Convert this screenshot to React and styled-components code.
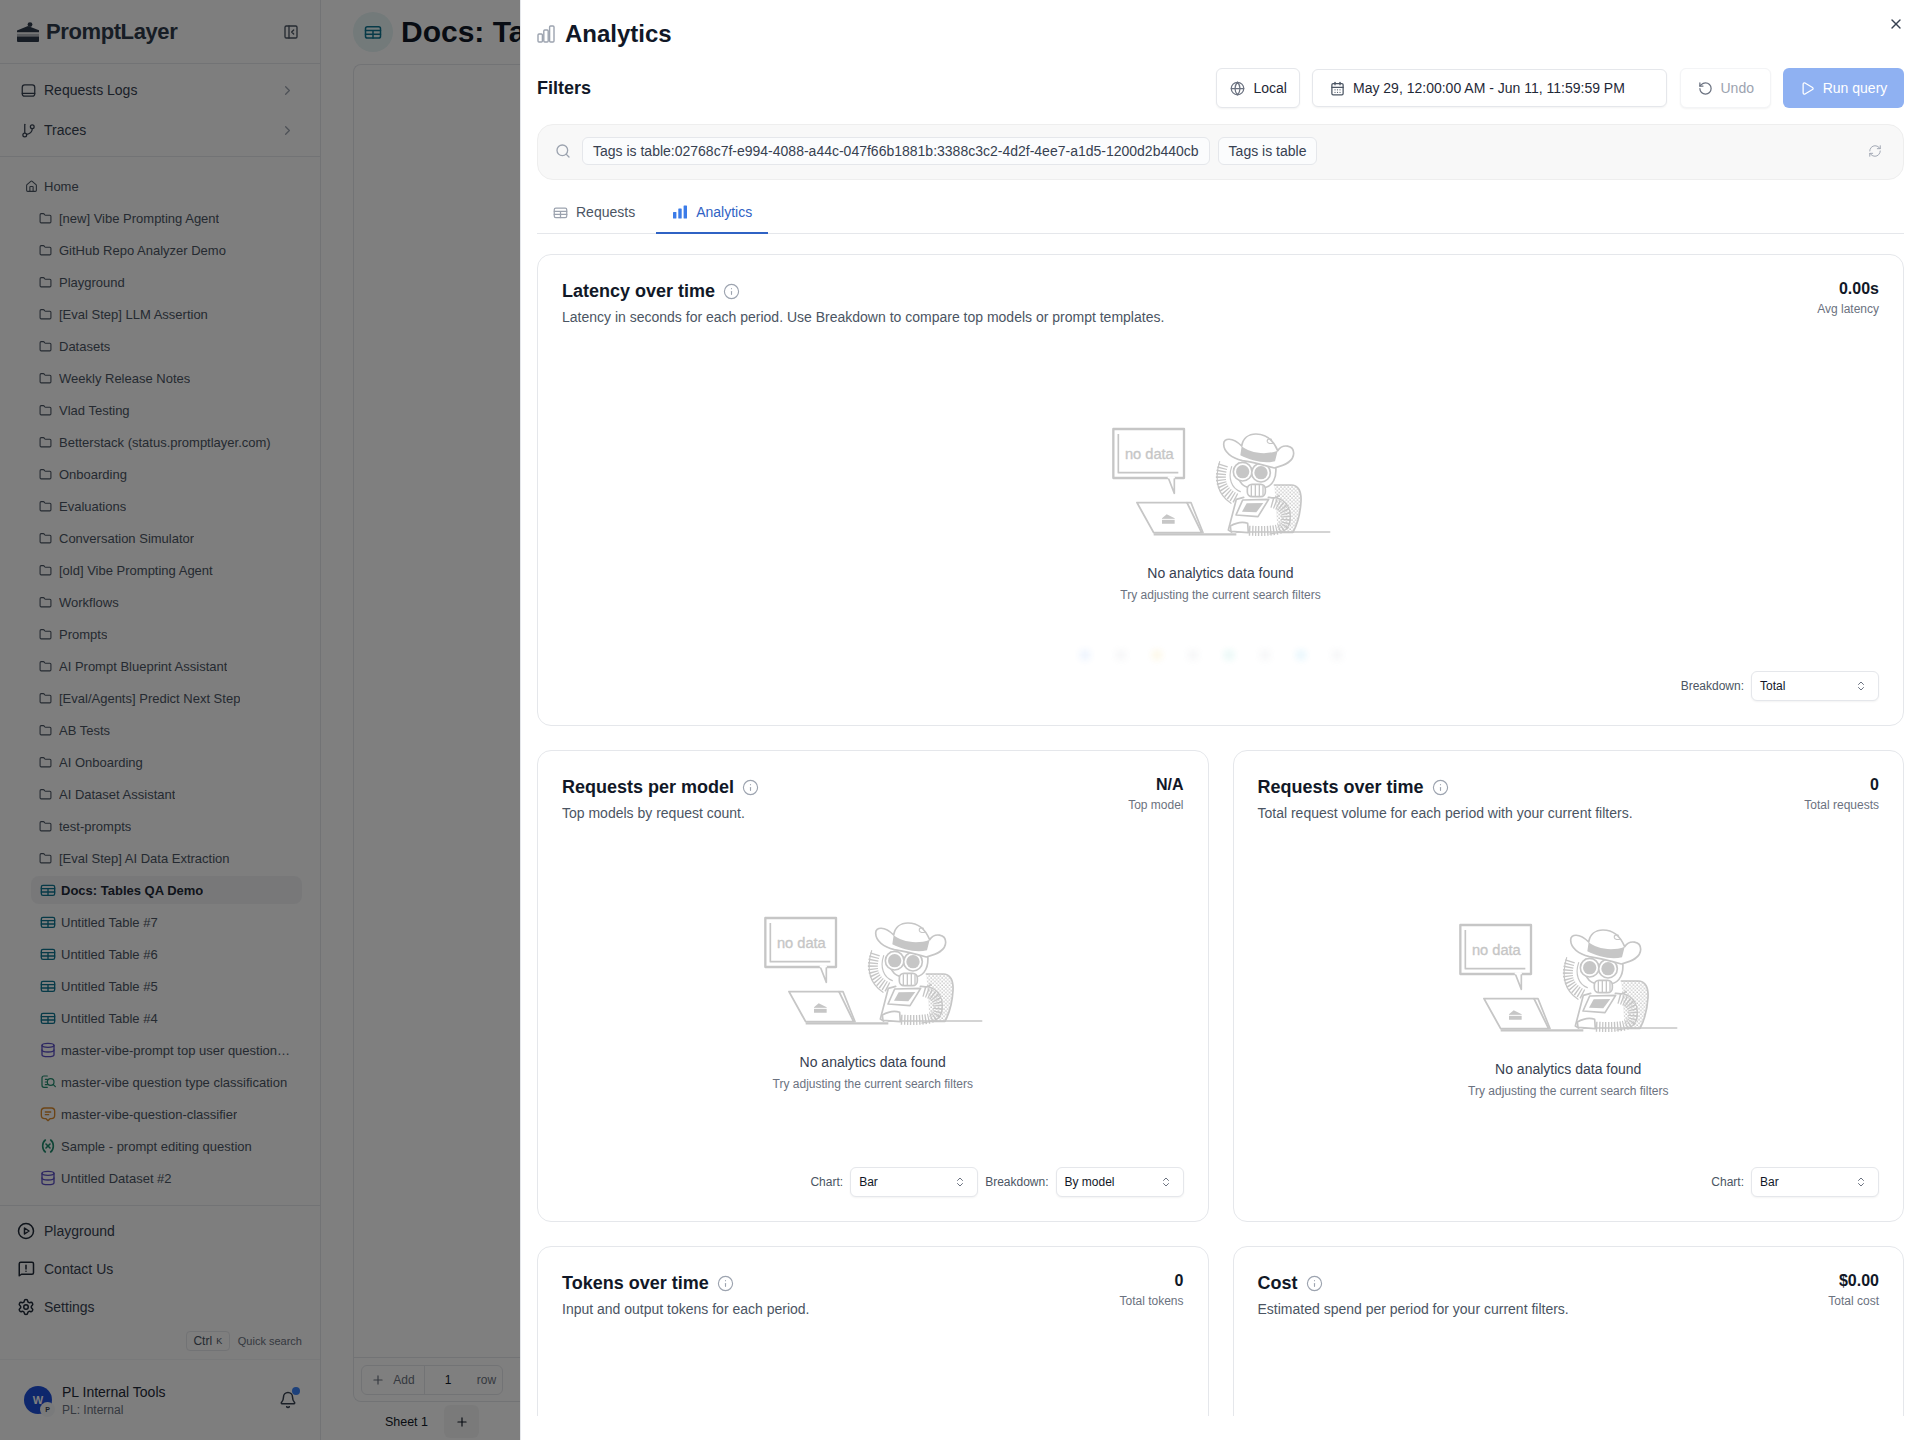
import React from "react";
import styled, { createGlobalStyle } from "styled-components";
import {
  Bell, ChevronRight, ChevronsUpDown, CalendarDays, Database, Folder, Globe, House,
  Info, PanelLeftClose, Play, Plus, RefreshCw, RotateCcw, Search, Settings,
  Variable, X,
} from "lucide-react";

const GlobalStyle = createGlobalStyle`
  html, body { margin: 0; padding: 0; background: #fff; }
  body { font-family: "Liberation Sans", Arial, sans-serif; color: #111827; }
  * { box-sizing: border-box; }
`;

const Page = styled.div`
  position: relative;
  width: 1920px;
  height: 1440px;
  display: flex;
  overflow: hidden;
  background: #fff;
`;

/* ---------- sidebar ---------- */
const Sidebar = styled.aside`
  width: 321px;
  flex: none;
  display: flex;
  flex-direction: column;
  height: 100%;
  background: #fcfcfc;
  border-right: 1px solid #e5e7eb;
`;
const LogoBar = styled.div`
  height: 64px;
  flex: none;
  display: flex;
  align-items: center;
  padding: 0 21px 0 16px;
  border-bottom: 1px solid #e5e7eb;
  color: #4b5563;
`;
const LogoText = styled.span`
  font-size: 22px;
  font-weight: 700;
  letter-spacing: -0.4px;
  color: #2f3a4a;
  margin-left: 6px;
  flex: 1;
`;
const NavTop = styled.div`
  padding: 6px 0;
  border-bottom: 1px solid #e5e7eb;
`;
const NavRow = styled.div`
  height: ${(p) => p.$h || 40}px;
  display: flex;
  align-items: center;
  gap: ${(p) => p.$gap || 8}px;
  padding: 0 25px 0 ${(p) => p.$pad || 21}px;
  font-size: 14px;
  color: #374151;
  svg { flex: none; }
`;
const NavLabel = styled.span`
  flex: 1;
`;
const TreeList = styled.div`
  flex: 1;
  padding: 13px 0 0;
  border-bottom: 1px solid #e5e7eb;
`;
const HomeRow = styled.div`
  height: 32px;
  display: flex;
  align-items: center;
  gap: 6px;
  padding-left: 25px;
  font-size: 13px;
  color: #4b5563;
`;
const TreeRow = styled.div`
  height: ${(p) => (p.$doc ? 28 : 32)}px;
  margin: ${(p) => (p.$doc ? `${p.$selected ? 2 : 0}px 18px 4px 31px` : "0 18px 0 31px")};
  display: flex;
  align-items: center;
  gap: ${(p) => (p.$doc ? 5 : 7)}px;
  padding: 0 6px 0 ${(p) => (p.$doc ? 9 : 8)}px;
  font-size: 13px;
  font-weight: ${(p) => (p.$selected ? 700 : 400)};
  color: ${(p) => (p.$selected ? "#1f2937" : "#4b5563")};
  background: ${(p) => (p.$selected ? "#f0f1f3" : "transparent")};
  border-radius: 8px;
  svg { flex: none; }
`;
const TreeLabel = styled.span`
  white-space: nowrap;
  overflow: hidden;
  text-overflow: ellipsis;
`;
const NavBottom = styled.div`
  padding-top: 6px;
  flex: none;
`;
const SearchHint = styled.div`
  height: 20px;
  flex: none;
  margin-top: 5px;
  padding-right: 18px;
  display: flex;
  justify-content: flex-end;
  align-items: center;
  gap: 8px;
  font-size: 11px;
  color: #6b7280;
`;
const Kbd = styled.span`
  height: 20px;
  width: 44px;
  border: 1px solid #e5e7eb;
  border-radius: 4px;
  display: flex;
  align-items: center;
  justify-content: center;
  gap: 4px;
  font-size: 12px;
  color: #4b5563;
  small { font-size: 9px; }
`;
const Account = styled.div`
  margin-top: 8px;
  height: 81px;
  flex: none;
  display: flex;
  align-items: center;
  padding: 0 23px 0 24px;
  border-top: 1px solid #f1f2f4;
`;
const Avatar = styled.div`
  position: relative;
  width: 28px;
  height: 28px;
  flex: none;
  border-radius: 50%;
  background: #1d4ed8;
  color: #fff;
  font-size: 11px;
  font-weight: 700;
  display: flex;
  align-items: center;
  justify-content: center;
`;
const AvatarBadge = styled.span`
  position: absolute;
  right: -3px;
  bottom: -3px;
  width: 15px;
  height: 15px;
  border-radius: 50%;
  background: #f3f4f6;
  color: #374151;
  font-size: 7px;
  display: flex;
  align-items: center;
  justify-content: center;
`;
const AccountText = styled.div`
  flex: 1;
  margin-left: 10px;
`;
const AccountName = styled.div`
  font-size: 14px;
  line-height: 18px;
  color: #1f2937;
`;
const AccountOrg = styled.div`
  font-size: 12px;
  line-height: 16px;
  margin-top: 1px;
  color: #6b7280;
`;
const BellWrap = styled.div`
  position: relative;
  width: 18px;
  height: 18px;
  color: #374151;
`;
const BellDot = styled.span`
  position: absolute;
  top: -4px;
  right: -3px;
  width: 8px;
  height: 8px;
  border-radius: 50%;
  background: #3b82f6;
`;

/* ---------- page under the drawer ---------- */
const Main = styled.main`
  flex: 1;
  min-width: 0;
  display: flex;
  flex-direction: column;
  padding: 0 0 2px 32px;
`;
const MainHeader = styled.div`
  height: 64px;
  flex: none;
  display: flex;
  align-items: center;
  gap: 8px;
  white-space: nowrap;
`;
const TitleIcon = styled.div`
  width: 40px;
  height: 40px;
  border-radius: 50%;
  background: #e6f4f5;
  color: #0e7490;
  flex: none;
  display: flex;
  align-items: center;
  justify-content: center;
`;
const MainTitle = styled.h1`
  margin: 0;
  font-size: 30px;
  font-weight: 700;
  color: #111827;
`;
const TableCard = styled.div`
  flex: 1;
  display: flex;
  flex-direction: column;
  justify-content: flex-end;
  border: 1px solid #e5e7eb;
  border-right: none;
  border-radius: 8px 0 0 8px;
`;
const AddBar = styled.div`
  height: 44px;
  border-top: 1px solid #e5e7eb;
  padding: 7px;
`;
const AddGroup = styled.div`
  width: 142px;
  height: 30px;
  display: flex;
  align-items: center;
  border: 1px solid #e5e7eb;
  border-radius: 6px;
  font-size: 12px;
  color: #6b7280;
`;
const AddPart = styled.span`
  width: ${(p) => p.$w}px;
  height: 100%;
  display: flex;
  align-items: center;
  justify-content: center;
  gap: 8px;
  color: ${(p) => (p.$dark ? "#111827" : "#6b7280")};
  border-right: ${(p) => (p.$line ? "1px solid #e5e7eb" : "none")};
`;
const SheetTabs = styled.div`
  height: 33px;
  margin-top: 3px;
  flex: none;
  display: flex;
  gap: 5px;
`;
const SheetTab = styled.div`
  width: 86px;
  display: flex;
  align-items: center;
  justify-content: flex-end;
  padding-right: 11px;
  font-size: 12.5px;
  color: #111827;
  border-radius: 6px;
`;
const SheetAdd = styled.div`
  width: 35px;
  background: #f5f5f5;
  border-radius: 6px;
  display: flex;
  align-items: center;
  justify-content: center;
  color: #111827;
`;
const Overlay = styled.div`
  position: absolute;
  inset: 0;
  background: rgba(0, 0, 0, 0.5);
`;

/* ---------- analytics drawer ---------- */
const Drawer = styled.section`
  position: absolute;
  top: 0;
  right: 0;
  bottom: 0;
  width: 1400px;
  background: #fff;
  border-left: 1px solid #e5e7eb;
  padding: 0 16px 24px;
  display: flex;
  flex-direction: column;
`;
const CloseButton = styled.div`
  position: absolute;
  top: 16px;
  right: 16px;
  color: #374151;
  display: flex;
`;
const DrawerTitle = styled.div`
  height: 68px;
  flex: none;
  display: flex;
  align-items: center;
  gap: 10px;
  font-size: 24px;
  font-weight: 700;
  color: #111827;
  padding-bottom: 1px;
`;
const FilterHead = styled.div`
  height: 40px;
  flex: none;
  display: flex;
  align-items: center;
  gap: 12.5px;
`;
const FilterTitle = styled.div`
  flex: 1;
  font-size: 18px;
  font-weight: 700;
  color: #111827;
`;
const ToolButton = styled.div`
  width: ${(p) => p.$w}px;
  height: ${(p) => p.$h || 40}px;
  display: flex;
  align-items: center;
  gap: ${(p) => p.$gap || 8}px;
  padding-left: ${(p) => p.$pad || 13}px;
  border: 1px solid ${(p) => (p.$muted ? "#f3f4f6" : "#e5e7eb")};
  border-radius: 6px;
  background: #fff;
  font-size: 14px;
  color: ${(p) => (p.$muted ? "#9ca3af" : "#1f2937")};
  box-shadow: 0 1px 2px rgba(0, 0, 0, 0.05);
`;
const RunButton = styled.div`
  width: 121px;
  height: 40px;
  display: flex;
  align-items: center;
  justify-content: center;
  gap: 8px;
  border-radius: 6px;
  background: #8fb1f2;
  color: #fff;
  font-size: 14px;
`;
const FilterBar = styled.div`
  height: 56px;
  flex: none;
  margin-top: 16px;
  display: flex;
  align-items: center;
  gap: 8px;
  padding: 0 21px 2px 17px;
  background: #f8f8f8;
  border: 1px solid #eeeeee;
  border-radius: 16px;
  color: #9ca3af;
`;
const Chip = styled.span`
  height: 28px;
  display: flex;
  align-items: center;
  padding: 0 10px;
  background: #fbfcfd;
  border: 1px solid #e5e7eb;
  border-radius: 6px;
  font-size: 14px;
  color: #374151;
  white-space: nowrap;
`;
const ChipFirst = styled(Chip)`
  margin-left: 3px;
`;
const Spacer = styled.div`
  flex: 1;
`;
const Tabs = styled.div`
  height: 54px;
  flex: none;
  display: flex;
  gap: 5px;
  border-bottom: 1px solid #e5e7eb;
`;
const Tab = styled.div`
  display: flex;
  align-items: center;
  gap: 8px;
  padding: 12px 16px 0;
  margin-bottom: -1px;
  font-size: 14px;
  color: ${(p) => (p.$active ? "#2f62c4" : "#4b5563")};
  border-bottom: 2px solid ${(p) => (p.$active ? "#2f62c4" : "transparent")};
`;
const ScrollArea = styled.div`
  flex: 1;
  min-height: 0;
  overflow: hidden;
  padding-top: 20px;
  display: flex;
  flex-direction: column;
  gap: 24px;
`;
const CardGrid = styled.div`
  display: grid;
  grid-template-columns: 1fr 1fr;
  gap: 24px;
`;
const Card = styled.article`
  position: relative;
  height: 472px;
  flex: none;
  display: flex;
  flex-direction: column;
  padding: 22px 24px 24px;
  background: #fff;
  border: 1px solid #e5e7eb;
  border-radius: 14px;
`;
const CardHead = styled.div`
  display: flex;
  justify-content: space-between;
  flex: none;
`;
const CardTitle = styled.h3`
  margin: 0;
  display: flex;
  align-items: center;
  gap: 8px;
  font-size: 18px;
  line-height: 28px;
  font-weight: 700;
  color: #111827;
  svg { color: #9ca3af; }
`;
const CardDesc = styled.p`
  margin: 2px 0 0;
  font-size: 14px;
  line-height: 20px;
  color: #4b5563;
`;
const Stat = styled.div`
  text-align: right;
`;
const StatValue = styled.div`
  font-size: 16px;
  line-height: 24px;
  font-weight: 700;
  color: #111827;
`;
const StatLabel = styled.div`
  font-size: 12px;
  line-height: 16px;
  color: #6b7280;
`;
const Chart = styled.div`
  flex: 1;
  min-height: 0;
  position: relative;
  display: flex;
  flex-direction: column;
  align-items: center;
  justify-content: center;
  padding-top: ${(p) => p.$offset}px;
`;
const EmptyTitle = styled.div`
  margin-top: 23px;
  font-size: 14px;
  line-height: 20px;
  color: #374151;
`;
const EmptyHint = styled.div`
  margin-top: 4px;
  font-size: 12px;
  line-height: 16px;
  color: #6b7280;
`;
const BlurLegend = styled.div`
  position: absolute;
  left: calc(50% - 10px);
  bottom: 64px;
  transform: translateX(-50%);
  display: flex;
  gap: 24px;
  filter: blur(3px);
  opacity: 0.08;
`;
const LegendDot = styled.span`
  width: 12px;
  height: 12px;
  border-radius: 50%;
  background: ${(p) => p.$color};
`;
const CardFoot = styled.div`
  height: 30px;
  flex: none;
  display: flex;
  justify-content: flex-end;
  align-items: center;
  gap: 7px;
  font-size: 12px;
  color: #4b5563;
`;
const Select = styled.div`
  width: 128px;
  height: 30px;
  display: flex;
  align-items: center;
  justify-content: space-between;
  padding: 0 11px 0 8px;
  background: #fff;
  border: 1px solid #e5e7eb;
  border-radius: 6px;
  box-shadow: 0 1px 2px rgba(0, 0, 0, 0.05);
  font-size: 12px;
  color: #111827;
  svg { color: #6b7280; }
`;

const folders = [
  "[new] Vibe Prompting Agent", "GitHub Repo Analyzer Demo", "Playground", "[Eval Step] LLM Assertion",
  "Datasets", "Weekly Release Notes", "Vlad Testing", "Betterstack (status.promptlayer.com)", "Onboarding",
  "Evaluations", "Conversation Simulator", "[old] Vibe Prompting Agent", "Workflows", "Prompts",
  "AI Prompt Blueprint Assistant", "[Eval/Agents] Predict Next Step", "AB Tests", "AI Onboarding",
  "AI Dataset Assistant", "test-prompts", "[Eval Step] AI Data Extraction",
];

const TEAL = "#0e7490";
const PURPLE = "#5b4fc4";

// wide table glyph used for table items, the page title and the Requests tab
const TableIcon = ({ size = 16, color = TEAL, weight = 2 }) => (
  <svg width={size} height={size} viewBox="0 0 24 24" fill="none" stroke={color} strokeWidth={weight} strokeLinecap="round" strokeLinejoin="round">
    <rect x="2" y="5" width="20" height="15" rx="2.5" />
    <path d="M2 10h20M2 15h20M12 10v10" />
  </svg>
);

const EvalIcon = () => (
  <svg width="16" height="16" viewBox="0 0 24 24" fill="none" stroke="#1f8a6d" strokeWidth="1.8" strokeLinecap="round" strokeLinejoin="round">
    <path d="M11 3H6a3 3 0 0 0-3 3v11a3 3 0 0 0 3 3h5" />
    <path d="M8 8h3M8 12h2M8 16h3" />
    <circle cx="16" cy="12" r="5" />
    <path d="m20 16 3 3" />
  </svg>
);

const BubbleIcon = () => (
  <svg width="16" height="16" viewBox="0 0 24 24" fill="none" stroke="#d9882b" strokeWidth="2" strokeLinecap="round" strokeLinejoin="round">
    <path d="M7 3h10a5 5 0 0 1 5 5v6a5 5 0 0 1-5 5h-2l-3 3-3-3H7a5 5 0 0 1-5-5V8a5 5 0 0 1 5-5z" />
    <path d="M8 9h8M8 13h5" />
  </svg>
);

const docs = [
  { name: "Docs: Tables QA Demo", icon: <TableIcon />, selected: true },
  { name: "Untitled Table #7", icon: <TableIcon /> },
  { name: "Untitled Table #6", icon: <TableIcon /> },
  { name: "Untitled Table #5", icon: <TableIcon /> },
  { name: "Untitled Table #4", icon: <TableIcon /> },
  { name: "master-vibe-prompt top user questions dataset", icon: <Database size={16} color={PURPLE} /> },
  { name: "master-vibe question type classification", icon: <EvalIcon /> },
  { name: "master-vibe-question-classifier", icon: <BubbleIcon /> },
  { name: "Sample - prompt editing question", icon: <Variable size={16} color="#1f8a6d" strokeWidth={2.4} /> },
  { name: "Untitled Dataset #2", icon: <Database size={16} color={PURPLE} /> },
];

const CakeLogo = () => (
  <svg width="24" height="20" viewBox="0 0 24 20" fill="#2f3a4a">
    <circle cx="14" cy="2.6" r="2.4" />
    <path d="M1 8.5 12 4l11 4.2v2H1z" />
    <path d="M1 11.8h22v2.6H1z" opacity="0.35" />
    <path d="M1 14.6h22V19a1 1 0 0 1-1 1H2a1 1 0 0 1-1-1z" />
  </svg>
);

const RequestsIcon = () => (
  <svg width="15" height="15" viewBox="0 0 24 24" fill="none" stroke="currentColor" strokeWidth="2" strokeLinecap="round" strokeLinejoin="round">
    <rect x="2" y="3" width="20" height="18" rx="4" />
    <path d="M2 16.5h20" />
  </svg>
);

const TracesIcon = () => (
  <svg width="15" height="15" viewBox="0 0 24 24" fill="none" stroke="currentColor" strokeWidth="2" strokeLinecap="round" strokeLinejoin="round">
    <path d="M6 2v13" />
    <circle cx="6" cy="19" r="3" />
    <circle cx="18" cy="6" r="3" />
    <path d="M18 9c0 5-4 9-9 9" />
  </svg>
);

const BarsOutline = () => (
  <svg width="18" height="18" viewBox="0 0 18 18" fill="none" stroke="#9ca3af" strokeWidth="1.4">
    <rect x="1" y="9" width="4.4" height="8" rx="1" />
    <rect x="6.8" y="5" width="4.4" height="12" rx="1" />
    <rect x="12.6" y="1" width="4.4" height="16" rx="1" />
  </svg>
);

const BarsSolid = () => (
  <svg width="16" height="16" viewBox="0 0 16 16" fill="#3b7be8">
    <rect x="1" y="8" width="3.4" height="6.5" rx="0.6" />
    <rect x="6.3" y="4.5" width="3.4" height="10" rx="0.6" />
    <rect x="11.6" y="1.5" width="3.4" height="13" rx="0.6" />
  </svg>
);

/* the "no data" mascot, drawn in 3x pixel units of the reference */
const NoDataArt = () => {
  const c = "#c6c6c6";
  return (
    <svg width="224" height="116" viewBox="84 72 672 348" fill="none" stroke={c} strokeWidth="5" strokeLinejoin="round" strokeLinecap="round">
      <defs>
        <pattern id="chair-dots" width="11" height="11" patternUnits="userSpaceOnUse">
          <circle cx="3" cy="3" r="2.6" fill={c} stroke="none" />
          <circle cx="8.5" cy="8.5" r="2.6" fill={c} stroke="none" />
        </pattern>
      </defs>
      <rect x="97" y="87" width="212" height="147" strokeWidth="7" strokeLinecap="butt" />
      <path d="M112 102v116h180" strokeLinecap="butt" />
      <path d="M262 234l18 46v-46" fill="#fff" strokeWidth="5" />
      <path d="M264 232h14" stroke="#fff" strokeWidth="7" />
      <text x="205" y="178" textAnchor="middle" fontFamily="Liberation Sans, Arial, sans-serif" fontSize="44" fill={c} stroke={c} strokeWidth="1">no data</text>
      <path d="M168 308h150l44 90H218z" strokeWidth="5.5" />
      <path d="M318 308h12l36 90" />
      <path d="M218 403h248" strokeWidth="7" strokeLinecap="butt" />
      <path d="M243 355l14-12 24 12v16h-38z" fill={c} stroke="none" />
      <path d="M243 358h38" stroke="#fff" strokeWidth="3" />
      <path d="M466 396h280" />
      <g transform="translate(300 60)">
        <path d="M280 195h50c22 0 32 18 30 50-2 34-10 66-24 92h-46" fill="url(#chair-dots)" />
        <path d="M165 235C125 215 108 185 128 130" strokeWidth="30" strokeDasharray="4 5" strokeLinecap="butt" />
        <path d="M150 250C112 225 98 185 116 125M178 215C152 205 140 175 152 140" strokeWidth="3.5" />
        <path d="M188 232l-22 6-24 92 10 6" />
        <path d="M262 232c14 2 24 4 32-6" />
        <path d="M272 248c30 8 48 24 42 58-4 22-26 30-112 26" strokeWidth="30" strokeDasharray="4 5" strokeLinecap="butt" />
        <path d="M282 232c34 8 52 36 44 74-6 30-30 32-60 36" strokeWidth="3.5" />
        <path d="M148 318c18-10 36-14 52-8l2 28-52-4z" fill="#fff" />
        <path d="M185 240l78-2-32 52-66-5z" fill="#fff" />
        <path d="M197 250l50-1-21 28-43-2z" fill={c} stroke="none" />
        <path d="M172 130c-10 30 2 66 28 72l50 2c26-6 38-32 34-66" fill="#fff" />
        <rect x="199" y="193" width="54" height="37" rx="14" fill="#fff" />
        <path d="M211 197v30M223 195v34M235 195v34M246 198v26" strokeWidth="4" />
        <circle cx="185" cy="155" r="28" fill="#fff" />
        <circle cx="185" cy="155" r="20" fill={c} stroke="none" />
        <circle cx="240" cy="158" r="28" fill="#fff" />
        <circle cx="240" cy="158" r="20" fill={c} stroke="none" />
        <path d="M128 72c0-18 26-22 54 6 4-22 20-36 43-36 30 0 50 14 65 50 15-22 48-17 48 8 0 25-26 36-58 44-36-10-70-18-96-22-32-8-56-26-56-50z" fill="#fff" />
        <path d="M182 78c18 18 68 30 108 14l-8 32c-32 8-72-2-104-18z" fill={c} stroke="none" />
        <path d="M271 58c-6-4-14 0-12 7 2 5 10 7 18 4" strokeWidth="3.5" />
      </g>
    </svg>
  );
};

const EmptyState = ({ offset }) => (
  <Chart $offset={offset}>
    <NoDataArt />
    <EmptyTitle>No analytics data found</EmptyTitle>
    <EmptyHint>Try adjusting the current search filters</EmptyHint>
  </Chart>
);

const SelectBox = ({ label, value }) => (
  <>
    <span>{label}</span>
    <Select>
      {value}
      <ChevronsUpDown size={12} />
    </Select>
  </>
);

const Header = ({ title, desc, value, label }) => (
  <CardHead>
    <div>
      <CardTitle>{title}<Info size={17} strokeWidth={1.6} /></CardTitle>
      <CardDesc>{desc}</CardDesc>
    </div>
    <Stat>
      <StatValue>{value}</StatValue>
      <StatLabel>{label}</StatLabel>
    </Stat>
  </CardHead>
);

function BlurLegendRow() {
  return (
    <BlurLegend>
      {["#3b82f6", "#9ca3af", "#eab308", "#9ca3af", "#14b8a6", "#9ca3af", "#0ea5e9", "#9ca3af"].map((color, i) => (
        <LegendDot key={i} $color={color} />
      ))}
    </BlurLegend>
  );
}

export default function App() {
  return (
    <Page>
      <GlobalStyle />
      <Sidebar>
        <LogoBar>
          <CakeLogo />
          <LogoText>PromptLayer</LogoText>
          <PanelLeftClose size={16} />
        </LogoBar>
        <NavTop>
          <NavRow><RequestsIcon /><NavLabel>Requests Logs</NavLabel><ChevronRight size={15} color="#9ca3af" /></NavRow>
          <NavRow><TracesIcon /><NavLabel>Traces</NavLabel><ChevronRight size={15} color="#9ca3af" /></NavRow>
        </NavTop>
        <TreeList>
          <HomeRow><House size={13} />Home</HomeRow>
          {folders.map((name) => (
            <TreeRow key={name}><Folder size={13} /><TreeLabel>{name}</TreeLabel></TreeRow>
          ))}
          {docs.map((doc) => (
            <TreeRow key={doc.name} $doc $selected={doc.selected}>{doc.icon}<TreeLabel>{doc.name}</TreeLabel></TreeRow>
          ))}
        </TreeList>
        <NavBottom>
          <NavRow $h={38} $pad={17} $gap={9}><svg width="18" height="18" viewBox="0 0 24 24" fill="none" stroke="#1f2937" strokeWidth="2" strokeLinejoin="round"><circle cx="12" cy="12" r="10" /><path d="m10 8 6 4-6 4z" /></svg>Playground</NavRow>
          <NavRow $h={38} $pad={17} $gap={9}><svg width="18" height="18" viewBox="0 0 24 24" fill="none" stroke="#1f2937" strokeWidth="2" strokeLinecap="round" strokeLinejoin="round"><path d="M3 21V5a2 2 0 0 1 2-2h15a2 2 0 0 1 2 2v12a2 2 0 0 1-2 2H6z" /><path d="M12 7v5M12 15h.01" /></svg>Contact Us</NavRow>
          <NavRow $h={38} $pad={17} $gap={9}><Settings size={18} color="#1f2937" />Settings</NavRow>
        </NavBottom>
        <SearchHint>
          <Kbd>Ctrl <small>K</small></Kbd>
          Quick search
        </SearchHint>
        <Account>
          <Avatar>W<AvatarBadge>P</AvatarBadge></Avatar>
          <AccountText>
            <AccountName>PL Internal Tools</AccountName>
            <AccountOrg>PL: Internal</AccountOrg>
          </AccountText>
          <BellWrap><Bell size={18} /><BellDot /></BellWrap>
        </Account>
      </Sidebar>

      <Main>
        <MainHeader>
          <TitleIcon><TableIcon size={18} /></TitleIcon>
          <MainTitle>Docs: Tables QA Demo</MainTitle>
        </MainHeader>
        <TableCard>
          <AddBar>
            <AddGroup>
              <AddPart $w={63} $line><Plus size={14} />Add</AddPart>
              <AddPart $w={46} $dark>1</AddPart>
              <AddPart $w={31}>row</AddPart>
            </AddGroup>
          </AddBar>
        </TableCard>
        <SheetTabs>
          <SheetTab>Sheet 1</SheetTab>
          <SheetAdd><Plus size={14} /></SheetAdd>
        </SheetTabs>
      </Main>

      <Overlay />

      <Drawer>
        <CloseButton><X size={16} /></CloseButton>
        <DrawerTitle><BarsOutline />Analytics</DrawerTitle>
        <FilterHead>
          <FilterTitle>Filters</FilterTitle>
          <ToolButton $w={84} $gap={9}><Globe size={15} color="#6b7280" />Local</ToolButton>
          <ToolButton $w={355} $h={38} $pad={17}><CalendarDays size={15} color="#4b5563" />May 29, 12:00:00 AM - Jun 11, 11:59:59 PM</ToolButton>
          <ToolButton $w={91} $muted $pad={17}><RotateCcw size={15} color="#6b7280" />Undo</ToolButton>
          <RunButton><Play size={15} />Run query</RunButton>
        </FilterHead>
        <FilterBar>
          <Search size={16} />
          <ChipFirst>Tags is table:02768c7f-e994-4088-a44c-047f66b1881b:3388c3c2-4d2f-4ee7-a1d5-1200d2b440cb</ChipFirst>
          <Chip>Tags is table</Chip>
          <Spacer />
          <RefreshCw size={14} strokeWidth={1.6} />
        </FilterBar>
        <Tabs>
          <Tab><TableIcon size={15} color="#9ca3af" /> Requests</Tab>
          <Tab $active><BarsSolid />Analytics</Tab>
        </Tabs>
        <ScrollArea>
          <Card>
            <Header
              title="Latency over time"
              desc="Latency in seconds for each period. Use Breakdown to compare top models or prompt templates."
              value="0.00s"
              label="Avg latency"
            />
            <EmptyState offset={29} />
            <BlurLegendRow />
            <CardFoot><SelectBox label="Breakdown:" value="Total" /></CardFoot>
          </Card>
          <CardGrid>
            <Card>
              <Header title="Requests per model" desc="Top models by request count." value="N/A" label="Top model" />
              <EmptyState offset={15} />
              <CardFoot>
                <SelectBox label="Chart:" value="Bar" />
                <SelectBox label="Breakdown:" value="By model" />
              </CardFoot>
            </Card>
            <Card>
              <Header title="Requests over time" desc="Total request volume for each period with your current filters." value="0" label="Total requests" />
              <EmptyState offset={29} />
              <CardFoot><SelectBox label="Chart:" value="Bar" /></CardFoot>
            </Card>
          </CardGrid>
          <CardGrid>
            <Card>
              <Header title="Tokens over time" desc="Input and output tokens for each period." value="0" label="Total tokens" />
            </Card>
            <Card>
              <Header title="Cost" desc="Estimated spend per period for your current filters." value="$0.00" label="Total cost" />
            </Card>
          </CardGrid>
        </ScrollArea>
      </Drawer>
    </Page>
  );
}
